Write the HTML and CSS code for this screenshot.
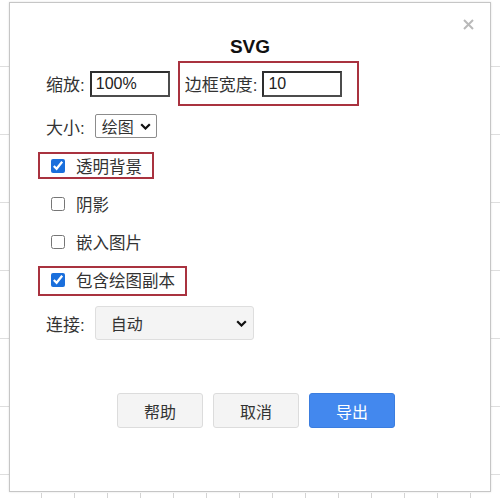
FILE: index.html
```html
<!DOCTYPE html>
<html lang="zh-CN">
<head>
    <meta charset="UTF-8">
    <meta name="viewport" content="width=device-width, initial-scale=1.0">
    <title>导出为 SVG</title>
    <link rel="stylesheet" href="styles.css">
</head>
<body>
    <div class="dialog">
        <button class="close" aria-label="关闭">
            <svg width="11" height="11" viewBox="0 0 11 11"><path d="M1 1 L10 10 M10 1 L1 10" /></svg>
        </button>

        <h2 class="title">SVG</h2>

        <div class="row row-scale">
            <label class="label">缩放:</label>
            <input class="text-input" type="text" value="100%">
            <div class="mark mark-border">
                <label class="label">边框宽度:</label>
                <input class="text-input" type="text" value="10">
            </div>
        </div>

        <div class="row row-size">
            <span class="label">大小:</span>
            <div class="select select-small">
                <span>绘图</span>
                <svg width="11" height="7" viewBox="0 0 11 7"><path d="M1.2 1.2 L5.5 5.5 L9.8 1.2" /></svg>
            </div>
        </div>

        <label class="check mark"><input type="checkbox" checked><span>透明背景</span></label>
        <label class="check"><input type="checkbox"><span>阴影</span></label>
        <label class="check"><input type="checkbox"><span>嵌入图片</span></label>
        <label class="check mark mark-tall"><input type="checkbox" checked><span>包含绘图副本</span></label>

        <div class="row row-link">
            <span class="label">连接:</span>
            <div class="select select-wide">
                <span>自动</span>
                <svg width="11" height="7" viewBox="0 0 11 7"><path d="M1.2 1.2 L5.5 5.5 L9.8 1.2" /></svg>
            </div>
        </div>

        <div class="actions">
            <button class="btn">帮助</button>
            <button class="btn">取消</button>
            <button class="btn btn-primary">导出</button>
        </div>
    </div>
    <div class="sheet-strip"></div>
</body>
</html>
```

FILE: styles.css
```css
:root {
    --text-color: #333;
    --mark-color: #a9323f;
    --primary-color: #4388ee;
    --button-bg: #f4f4f4;
    --button-border: #dcdcdc;
}

body {
    margin: 0;
    height: 498px;
    overflow: hidden;
    font-family: 'Liberation Sans', 'Noto Sans CJK SC', sans-serif;
    color: var(--text-color);
    background-color: #fff;
    background-image: repeating-linear-gradient(to bottom, transparent 0, transparent 66px, #dedede 66px, #dedede 67px, transparent 67px, transparent 68px);
}

.dialog {
    position: relative;
    box-sizing: border-box;
    width: 482px;
    height: 490px;
    margin: 2px 0 0 9px;
    padding: 33px 28px 0;
    background: #fff;
    border: 1px solid #c6c6c6;
    box-shadow: 0 0 2px rgba(0, 0, 0, 0.12);
}

.close {
    position: absolute;
    top: 16px;
    right: 16px;
    padding: 0;
    border: none;
    background: none;
    line-height: 0;
    cursor: pointer;
}

.close svg path {
    stroke: #b9b9b9;
    stroke-width: 2;
    fill: none;
}

.title {
    margin: 0;
    font-size: 19px;
    line-height: 22px;
    font-weight: bold;
    text-align: center;
    color: #111;
}

.row {
    display: flex;
    align-items: center;
}

.label {
    font-size: 17px;
    margin-right: 5px;
    white-space: nowrap;
}

.row > .label {
    margin-left: 8px;
}

.row-scale {
    height: 45px;
    margin-top: 3px;
}

.text-input {
    box-sizing: border-box;
    width: 80px;
    height: 26px;
    padding: 0 4px;
    font-family: inherit;
    font-size: 16px;
    color: #222;
    border: 2px solid #4c4c4c;
    border-top-color: #2e2e2e;
    border-left-color: #2e2e2e;
    border-radius: 0;
    outline: none;
}

.mark {
    box-sizing: border-box;
    border: 2px solid transparent;
}

.mark.check,
.mark-border {
    border-color: var(--mark-color);
}

.mark-border {
    display: flex;
    align-items: center;
    height: 45px;
    margin-left: 8px;
    padding: 0 15px 0 5px;
}

.row-size {
    height: 24px;
    margin-top: 8px;
}

.row-size > .label {
    margin-right: 10px;
}

.select {
    box-sizing: border-box;
    display: flex;
    align-items: center;
    justify-content: space-between;
    font-size: 16px;
    color: #333;
}

.select svg path {
    stroke: #111;
    stroke-width: 2.2;
    fill: none;
}

.select-small {
    width: 62px;
    height: 24px;
    padding: 0 5px 0 6px;
    border: 1px solid #8c8c8c;
    border-radius: 2px;
}

.select-wide {
    width: 159px;
    height: 34px;
    padding: 0 6px 0 15px;
    background: #f4f4f4;
    border: 1px solid #dedede;
    border-radius: 3px;
}

.check {
    box-sizing: border-box;
    display: flex;
    align-items: center;
    width: max-content;
    height: 27px;
    margin-top: 11px;
    padding: 0 10px 0 11px;
    border: 2px solid transparent;
    font-size: 16.5px;
    cursor: pointer;
}

.row-size + .check {
    margin-top: 14px;
}

.mark-tall {
    height: 30px;
    padding-bottom: 3px;
}

.check input {
    width: 14px;
    height: 14px;
    margin: 0 11px 0 0;
    accent-color: #1a6fdc;
}

.row-link {
    height: 34px;
    margin-top: 10px;
}

.row-link > .label {
    margin-right: 10px;
}

.actions {
    display: flex;
    gap: 10px;
    margin-top: 53px;
    padding-left: 79px;
}

.btn {
    box-sizing: border-box;
    width: 86px;
    height: 35px;
    padding: 0;
    font-family: inherit;
    font-size: 16px;
    color: #333;
    background: var(--button-bg);
    border: 1px solid var(--button-border);
    border-radius: 3px;
    cursor: pointer;
}

.btn-primary {
    color: #fff;
    background: var(--primary-color);
    border-color: #3b7ddf;
}

.sheet-strip {
    height: 6px;
    margin: 1px 9px 0 9px;
    background-image: repeating-linear-gradient(to right, transparent 0, transparent 32px, #d4d4d4 32px, #d4d4d4 33px);
}
```
